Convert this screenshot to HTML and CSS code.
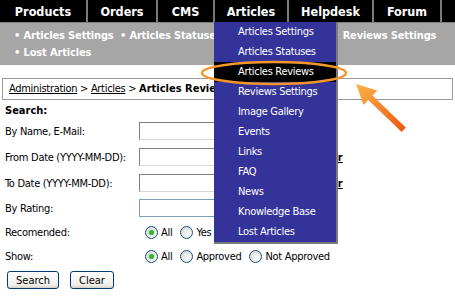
FILE: index.html
```html
<!DOCTYPE html>
<html>
<head>
<meta charset="utf-8">
<title>Articles Reviews</title>
<link rel="stylesheet" href="styles.css">
</head>
<body>
<div class="page">
  <nav class="topnav">
    <a class="tab tab-products">Products</a>
    <a class="tab tab-orders">Orders</a>
    <a class="tab tab-cms">CMS</a>
    <div class="tab tab-articles">Articles
      <ul class="dropdown">
        <li>Articles Settings</li>
        <li>Articles Statuses</li>
        <li class="active">Articles Reviews</li>
        <li>Reviews Settings</li>
        <li>Image Gallery</li>
        <li>Events</li>
        <li>Links</li>
        <li>FAQ</li>
        <li>News</li>
        <li>Knowledge Base</li>
        <li>Lost Articles</li>
      </ul>
    </div>
    <a class="tab tab-helpdesk">Helpdesk</a>
    <a class="tab tab-forum">Forum</a>
    <a class="tab tab-last"></a>
  </nav>

  <div class="subnav">
    <span class="sub">• Articles Settings</span>
    <span class="sub">• Articles Statuses</span>
    <span class="sub">• Articles Reviews</span>
    <span class="sub">• Reviews Settings</span>
    <span class="sub">• Lost Articles</span>
  </div>

  <div class="crumbs">
    <a href="#">Administration</a> &gt; <a href="#">Articles</a> &gt; <b>Articles Reviews</b>
  </div>

  <form class="search">
    <div class="search-title">Search:</div>
    <div class="row r26"><label>By Name, E-Mail:</label><input type="text" class="field"></div>
    <div class="row r26"><label>From Date (YYYY-MM-DD):</label><input type="text" class="field"><a class="cal" href="#">Calendar</a></div>
    <div class="row r26"><label>To Date (YYYY-MM-DD):</label><input type="text" class="field"><a class="cal" href="#">Calendar</a></div>
    <div class="row r24"><label>By Rating:</label><input type="text" class="field focus"></div>
    <div class="row r24"><label>Recomended:</label>
      <span class="opts">
        <span class="opt"><span class="radio on"></span>All</span>
        <span class="opt"><span class="radio"></span>Yes</span>
        <span class="opt"><span class="radio"></span>No</span>
      </span>
    </div>
    <div class="row r25"><label>Show:</label>
      <span class="opts">
        <span class="opt"><span class="radio on"></span>All</span>
        <span class="opt"><span class="radio"></span>Approved</span>
        <span class="opt"><span class="radio"></span>Not Approved</span>
      </span>
    </div>
    <div class="buttons">
      <button type="button" class="btn btn-search">Search</button>
      <button type="button" class="btn btn-clear">Clear</button>
    </div>
  </form>

  <svg class="callout" width="455" height="298" viewBox="0 0 455 298">
    <defs>
      <linearGradient id="arrowGrad" gradientUnits="userSpaceOnUse" x1="356" y1="84" x2="404" y2="130">
        <stop offset="0" stop-color="#fbb449"/>
        <stop offset="1" stop-color="#ec5a12"/>
      </linearGradient>
    </defs>
    <ellipse cx="274" cy="73" rx="72" ry="11" fill="none" stroke="#f5962a" stroke-width="2.5"/>
    <polygon fill="url(#arrowGrad)" points="356,84 377.3,90.6 372.5,95.6 405.8,127.5 401.6,131.9 368.3,100 363.5,105"/>
  </svg>
</div>
</body>
</html>
```

FILE: styles.css
```css
* { box-sizing: border-box; }

body {
  margin: 0;
  background: #ffffff;
  font-family: "DejaVu Sans Condensed", "DejaVu Sans", sans-serif;
  font-size: 11px;
  letter-spacing: -0.3px;
  color: #000;
}

b, .search-title, .tab, .cal {
  letter-spacing: 0;
}

.page {
  position: relative;
  width: 455px;
  height: 298px;
  overflow: hidden;
}

/* top navigation */
.topnav {
  display: flex;
  height: 23px;
  background: #000;
  border-bottom: 1px solid #808080;
}

.tab {
  position: relative;
  display: flex;
  align-items: center;
  justify-content: center;
  height: 22px;
  color: #fff;
  font-weight: bold;
  font-size: 12.5px;
  border-right: 2px solid #7a7a7a;
  flex: none;
}

.tab-products { width: 88px; }
.tab-orders { width: 70px; }
.tab-cms { width: 57px; }
.tab-articles { width: 74px; }
.tab-helpdesk { width: 85px; }
.tab-forum { width: 68px; }
.tab-last { flex: 1; border-right: none; }

/* dropdown */
.dropdown {
  position: absolute;
  top: 22px;
  left: -1px;
  width: 124px;
  margin: 0;
  padding: 0;
  list-style: none;
  background: #333399;
  border-right: 2px solid #7a7a7a;
  border-bottom: 2px solid #7a7a7a;
  z-index: 5;
  font-weight: normal;
  font-size: 11px;
  letter-spacing: -0.3px;
}

.dropdown li {
  height: 20px;
  line-height: 20px;
  padding-left: 24px;
  color: #fff;
  white-space: nowrap;
}

.dropdown li.active {
  background: #000;
}

/* sub navigation */
.subnav {
  height: 42px;
  background: #a6a6a6;
  padding: 4px 0 0 14px;
  line-height: 17px;
  color: #fff;
  font-weight: bold;
  font-size: 11px;
  letter-spacing: -0.15px;
}

.sub {
  white-space: nowrap;
  margin-right: 3px;
}

/* breadcrumbs */
.crumbs {
  margin: 13px 2px 0 2px;
  height: 22px;
  border: 1px solid #9a9a9a;
  padding-left: 6px;
  line-height: 20px;
}

.crumbs a {
  color: #000;
  text-decoration: underline;
}

/* search form */
.search {
  padding-left: 5px;
}

.search-title {
  padding-top: 3px;
  height: 18px;
  line-height: 15px;
  font-weight: bold;
}

.row {
  display: flex;
  align-items: center;
}

.r26 { height: 26px; }
.r24 { height: 24px; }
.r25 { height: 25px; }

.row label {
  width: 134px;
  flex: none;
  white-space: nowrap;
}

.field {
  width: 148px;
  height: 18px;
  margin: 0;
  padding: 0 2px;
  border: 1px solid #7f7f7f;
  border-right-color: #d8d8d8;
  border-bottom-color: #d8d8d8;
  background: #fff;
  font: inherit;
}

.field.focus {
  border: 1px solid #7f9db9;
}

.cal {
  margin-left: 6px;
  color: #000;
  font-weight: bold;
  text-decoration: underline;
}

.opts {
  display: flex;
  align-items: center;
  padding-left: 6px;
}

.opt {
  display: flex;
  align-items: center;
  margin-right: 8px;
}

.radio {
  width: 13px;
  height: 13px;
  margin-right: 3px;
  border-radius: 50%;
  border: 1px solid #1c5180;
  background: radial-gradient(circle at 65% 65%, #ffffff 0%, #e6e6e0 55%, #cfcfc8 100%);
  display: inline-flex;
  align-items: center;
  justify-content: center;
}

.radio.on::after {
  content: "";
  width: 5px;
  height: 5px;
  border-radius: 50%;
  background: #3fb53f;
  box-shadow: 0 0 1px #2c9c2c;
}

.buttons {
  display: flex;
  gap: 11px;
  padding-left: 2px;
  margin-top: 2px;
}

.btn {
  height: 18px;
  padding: 0;
  border: 1px solid #003c74;
  border-radius: 3px;
  background: linear-gradient(#ffffff, #f0f0ea 80%, #d6d0c5);
  font: inherit;
  color: #000;
}

.btn-search { width: 52px; }
.btn-clear { width: 44px; }

/* annotation overlay */
.callout {
  position: absolute;
  left: 0;
  top: 0;
  pointer-events: none;
  z-index: 10;
}
```
